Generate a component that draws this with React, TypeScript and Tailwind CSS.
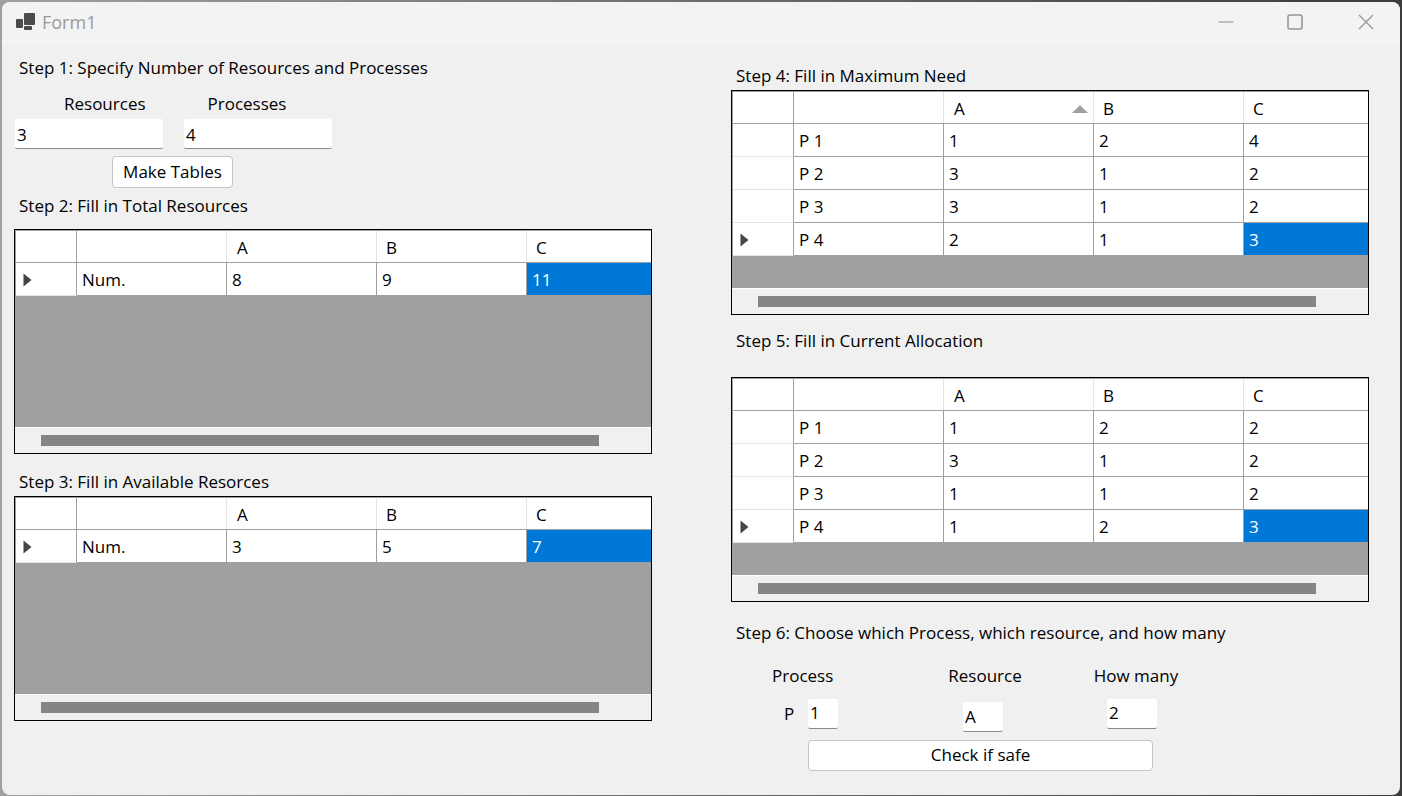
import React from 'react';

const uiFont = { fontFamily: '"Open Sans", "Noto Sans", sans-serif' };

function Marker() {
  return (
    <svg width="9" height="14" viewBox="0 0 9 14" className="block">
      <path d="M0.5 0.5 L8.5 7 L0.5 13.5 Z" fill="#454545" />
    </svg>
  );
}

function SortArrow() {
  return (
    <svg width="16" height="9" viewBox="0 0 16 9" className="block mt-[1px]">
      <path d="M8 0 L16 8 L0 8 Z" fill="#a0a0a0" />
    </svg>
  );
}

function HeaderRow({ sorted }: { sorted?: boolean }) {
  return (
    <div className="flex h-[32px] bg-white border-b border-[#a0a0a0]">
      <div className="w-[61px] border-r border-[#a0a0a0]" />
      <div className="w-[150px] border-r border-[#e4e4e4]" />
      <div className="w-[150px] border-r border-[#e4e4e4] pl-[10px] pt-[2px] flex items-center justify-between pr-[5px]">
        <span>A</span>
        {sorted && <SortArrow />}
      </div>
      <div className="w-[150px] border-r border-[#e4e4e4] pl-[9px] pt-[2px] flex items-center">B</div>
      <div className="flex-1 pl-[9px] pt-[2px] flex items-center">C</div>
    </div>
  );
}

function DataRow({ name, values, current }: { name: string; values: string[]; current?: boolean }) {
  return (
    <div className="flex h-[33px] bg-white border-b border-[#a0a0a0]">
      <div className="w-[61px] -mb-px border-b border-r border-b-[#e4e4e4] border-r-[#a0a0a0] flex items-center pl-[7px] pt-[2px] bg-white">
        {current && <Marker />}
      </div>
      <div className="w-[150px] border-r border-[#a0a0a0] pl-[5px] pt-[2px] flex items-center">{name}</div>
      <div className="w-[150px] border-r border-[#a0a0a0] pl-[5px] pt-[2px] flex items-center">{values[0]}</div>
      <div className="w-[150px] border-r border-[#a0a0a0] pl-[5px] pt-[2px] flex items-center">{values[1]}</div>
      <div className={`flex-1 pl-[5px] pt-[2px] flex items-center ${current ? 'bg-[#0078d7] text-white' : ''}`}>{values[2]}</div>
    </div>
  );
}

function Grid({ rows, sorted }: { rows: { name: string; values: string[] }[]; sorted?: boolean }) {
  return (
    <div className="flex flex-col w-[638px] h-[225px] border border-black bg-[#a0a0a0]">
      <div className="border-l border-t border-[#a0a0a0]">
        <HeaderRow sorted={sorted} />
        {rows.map((row, i) => (
          <DataRow key={row.name} name={row.name} values={row.values} current={i === rows.length - 1} />
        ))}
      </div>
      <div className="flex-1" />
      <div className="h-[26px] shrink-0 bg-[#f0f0f0] border-t border-white pl-[26px] pt-[7px]">
        <div className="w-[558px] h-[11px] bg-[#858585]" />
      </div>
    </div>
  );
}

function Field({ value, className }: { value: string; className: string }) {
  return (
    <div className={`h-[30px] bg-white border-b border-[#8a8a8a] rounded-[2px] pl-[2px] flex items-center shrink-0 ${className}`}>
      {value}
    </div>
  );
}

function WinButton({ label, className }: { label: string; className: string }) {
  return (
    <div className={`bg-white border border-[#c4c4c4] rounded-[4px] flex items-center justify-center ${className}`}>
      {label}
    </div>
  );
}

function TitleBar() {
  return (
    <div className="h-[43px] shrink-0 bg-[#f3f3f3] flex items-center pb-[3px]">
      <svg width="20" height="18" viewBox="0 0 20 18" className="ml-[14px]">
        <rect x="0" y="6" width="7" height="9" rx="1" fill="#4a4a4a" />
        <rect x="8" y="0" width="11" height="12" rx="1" fill="#4a4a4a" />
        <rect x="8" y="13" width="8" height="4" rx="1" fill="#4a4a4a" />
      </svg>
      <span className="ml-[6px] text-[#9b9b9b] text-[18px]">Form1</span>
      <div className="ml-auto flex items-center">
        <svg width="16" height="16" viewBox="0 0 16 16" className="mr-[53px]">
          <path d="M0.5 8 H15.5" stroke="#8e8e8e" strokeWidth="1" />
        </svg>
        <svg width="16" height="16" viewBox="0 0 16 16" className="mr-[55px]">
          <rect x="1" y="1" width="14" height="14" rx="2" fill="none" stroke="#969696" strokeWidth="1.6" />
        </svg>
        <svg width="16" height="16" viewBox="0 0 16 16" className="mr-[26px]">
          <path d="M1 1 L15 15 M15 1 L1 15" stroke="#969696" strokeWidth="1.3" />
        </svg>
      </div>
    </div>
  );
}

const total = [{ name: 'Num.', values: ['8', '9', '11'] }];
const available = [{ name: 'Num.', values: ['3', '5', '7'] }];
const maxNeed = [
  { name: 'P 1', values: ['1', '2', '4'] },
  { name: 'P 2', values: ['3', '1', '2'] },
  { name: 'P 3', values: ['3', '1', '2'] },
  { name: 'P 4', values: ['2', '1', '3'] },
];
const allocation = [
  { name: 'P 1', values: ['1', '2', '2'] },
  { name: 'P 2', values: ['3', '1', '2'] },
  { name: 'P 3', values: ['1', '1', '2'] },
  { name: 'P 4', values: ['1', '2', '3'] },
];

export default function App() {
  return (
    <div className="w-[1402px] h-[796px] bg-linear-to-r from-[#a0a0a0] to-[#3c3c3c] p-[2px] overflow-hidden leading-[20px] text-[17px] text-black" style={uiFont}>
      <div className="w-[1398px] h-[793px] bg-[#f0f0f0] rounded-[8px] overflow-hidden flex flex-col">
        <TitleBar />
        <div className="flex flex-1">
          {/* left column */}
          <div className="w-[729px] pl-[12px] shrink-0">
            <div className="pl-[5px] mt-[13px]">Step 1: Specify Number of Resources and Processes</div>
            <div className="flex mt-[16px]">
              <div className="ml-[50px]">Resources</div>
              <div className="ml-[62px]">Processes</div>
            </div>
            <div className="flex gap-[21px] mt-[5px] pl-px">
              <Field value="3" className="w-[148px] pt-[2px]" />
              <Field value="4" className="w-[148px] pt-[2px]" />
            </div>
            <WinButton label="Make Tables" className="w-[121px] h-[32px] mt-[7px] ml-[98px]" />
            <div className="pl-[5px] mt-[8px]">Step 2: Fill in Total Resources</div>
            <div className="mt-[13px]">
              <Grid rows={total} />
            </div>
            <div className="pl-[5px] mt-[18px]">Step 3: Fill in Available Resorces</div>
            <div className="mt-[4px]">
              <Grid rows={available} />
            </div>
          </div>

          {/* right column */}
          <div className="flex-1">
            <div className="pl-[5px] mt-[21px]">Step 4: Fill in Maximum Need</div>
            <div className="mt-[4px]">
              <Grid rows={maxNeed} sorted />
            </div>
            <div className="pl-[5px] mt-[16px]">Step 5: Fill in Current Allocation</div>
            <div className="mt-[26px]">
              <Grid rows={allocation} />
            </div>
            <div className="pl-[5px] mt-[21px]">Step 6: Choose which Process, which resource, and how many</div>
            <div className="flex mt-[23px]">
              <div className="ml-[41px]">Process</div>
              <div className="ml-[115px]">Resource</div>
              <div className="ml-[72px]">How many</div>
            </div>
            <div className="flex items-start mt-[13px]">
              <div className="ml-[53px] mt-[5px] w-[24px]">P</div>
              <Field value="1" className="w-[30px] pb-[2px]" />
              <Field value="A" className="w-[40px] ml-[125px] mt-[3px]" />
              <Field value="2" className="w-[50px] ml-[104px] pb-[2px]" />
            </div>
            <WinButton label="Check if safe" className="w-[345px] h-[31px] mt-[8px] ml-[77px] pb-[2px]" />
          </div>
        </div>
      </div>
    </div>
  );
}
